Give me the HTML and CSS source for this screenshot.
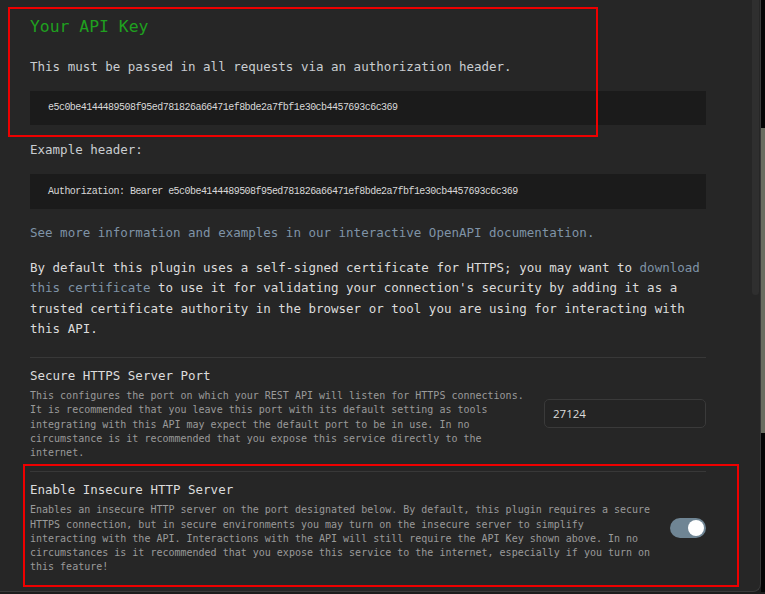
FILE: index.html
```html
<!DOCTYPE html>
<html lang="en">
<head>
<meta charset="utf-8">
<title>Local REST API settings</title>
<link rel="stylesheet" href="styles.css">
</head>
<body>
<div class="screen">
  <div class="modal">
    <div class="content">
      <h2 class="title">Your API Key</h2>
      <p class="text">This must be passed in all requests via an authorization header.</p>
      <pre class="code">e5c0be4144489508f95ed781826a66471ef8bde2a7fbf1e30cb4457693c6c369</pre>
      <p class="text text-after-code">Example header:</p>
      <pre class="code code-tall">Authorization: Bearer e5c0be4144489508f95ed781826a66471ef8bde2a7fbf1e30cb4457693c6c369</pre>
      <p class="text link-line"><a class="link" href="#">See more information and examples in our interactive OpenAPI documentation.</a></p>
      <p class="para">By default this plugin uses a self-signed certificate for HTTPS; you may want to <a class="link" href="#">download this certificate</a> to use it for validating your connection's security by adding it as a trusted certificate authority in the browser or tool you are using for interacting with this API.</p>

      <div class="setting">
        <div class="setting-info">
          <div class="setting-name">Secure HTTPS Server Port</div>
          <div class="setting-desc">This configures the port on which your REST API will listen for HTTPS connections. It is recommended that you leave this port with its default setting as tools integrating with this API may expect the default port to be in use. In no circumstance is it recommended that you expose this service directly to the internet.</div>
        </div>
        <div class="setting-control">
          <input class="port-input" type="text" value="27124">
        </div>
      </div>

      <div class="setting setting-last">
        <div class="setting-info">
          <div class="setting-name">Enable Insecure HTTP Server</div>
          <div class="setting-desc">Enables an insecure HTTP server on the port designated below. By default, this plugin requires a secure HTTPS connection, but in secure environments you may turn on the insecure server to simplify interacting with the API. Interactions with the API will still require the API Key shown above. In no circumstances is it recommended that you expose this service to the internet, especially if you turn on this feature!</div>
        </div>
        <div class="setting-control">
          <div class="toggle"><div class="knob"></div></div>
        </div>
      </div>
    </div>
    <div class="scrollbar"><div class="thumb"></div></div>
  </div>
  <div class="backdrop">
    <div class="bd-top"></div>
    <div class="bd-mid"></div>
    <div class="bd-low"></div>
  </div>
</div>
<div class="bottom-strip"></div>

<div class="annot annot-1"></div>
<div class="annot annot-2"></div>
</body>
</html>
```
FILE: styles.css
```css
html, body {
  margin: 0;
  padding: 0;
}
body {
  width: 765px;
  height: 594px;
  overflow: hidden;
  background: #1c1c1c;
  font-family: "DejaVu Sans Mono", "Liberation Mono", monospace;
  position: relative;
}
.screen {
  display: flex;
  height: 592px;
}
.modal {
  width: 761px;
  height: 592px;
  box-sizing: border-box;
  display: flex;
  background: #262626;
  border-right: 1px solid #3a3a3a;
  border-bottom: 1px solid #3a3a3a;
  border-bottom-right-radius: 8px;
  overflow: hidden;
}
.content {
  flex: 1;
  padding: 0 46px 0 30px;
  overflow: hidden;
}
.scrollbar {
  width: 7px;
  flex: none;
  padding-right: 1px;
}
.thumb {
  width: 7px;
  height: 295px;
  background: #2f2f2f;
  border-radius: 0 0 4px 4px;
}
.backdrop {
  width: 4px;
  display: flex;
  flex-direction: column;
}
.bd-top {
  height: 128px;
  background: #050505;
}
.bd-mid {
  height: 305px;
  background: #6a6d60;
}
.bd-low {
  flex: 1;
  background: #050505;
}
.bottom-strip {
  height: 2px;
  background: #1c1c1c;
}

.title {
  margin: 17px 0 0;
  font-size: 16.4px;
  line-height: 20px;
  font-weight: normal;
  color: #1fa01f;
}
.text {
  margin: 14px 0 0;
  font-size: 12.5px;
  line-height: 20px;
  color: #c9cdd1;
}
.title + .text {
  margin-top: 20px;
}
.text-after-code {
  margin-top: 15px;
}
.code {
  margin: 14px 0 0;
  height: 34px;
  line-height: 34px;
  padding: 0 18px;
  background: #1b1b1b;
  font-family: "Liberation Mono", monospace;
  font-size: 10px;
  letter-spacing: -0.54px;
  color: #d8d8d8;
  white-space: pre;
  overflow: hidden;
}
.code-tall {
  height: 35px;
  line-height: 35px;
}
.link {
  color: #7f93a6;
  text-decoration: none;
}
.para {
  margin: 15px 0 0;
  font-size: 12.5px;
  line-height: 20.3px;
  color: #dcdcdc;
}

.setting {
  display: flex;
  align-items: center;
  gap: 16px;
  border-top: 1px solid #383838;
  padding: 9px 0 11px;
}
.para + .setting {
  margin-top: 18px;
}
.setting-last {
  border-bottom: 1px solid #383838;
}
.setting-info {
  flex: 1;
  min-width: 0;
}
.setting-name {
  font-size: 12.5px;
  line-height: 18px;
  color: #dcdcdc;
}
.setting-desc {
  margin-top: 4px;
  font-size: 10px;
  line-height: 14.25px;
  color: #9a9a9a;
}
.setting-control {
  flex: none;
  display: flex;
  align-items: center;
}
.port-input {
  width: 162px;
  height: 29px;
  box-sizing: border-box;
  margin: 0;
  padding: 0 8px;
  border: 1px solid #3a3a3a;
  border-radius: 5px;
  background: #242424;
  color: #dcdcdc;
  font-family: "Open Sans", "Noto Sans", sans-serif;
  font-size: 11.5px;
  outline: none;
}
.toggle {
  width: 36px;
  height: 20px;
  border-radius: 10px;
  background: #6f8594;
  display: flex;
  align-items: center;
  justify-content: flex-end;
  padding: 0 2px;
  box-sizing: border-box;
}
.knob {
  width: 16px;
  height: 16px;
  border-radius: 50%;
  background: #ffffff;
}

.annot {
  position: absolute;
  border: 2px solid #ee0000;
  box-sizing: border-box;
  pointer-events: none;
}
.annot-1 {
  left: 8px;
  top: 7px;
  width: 590px;
  height: 130px;
}
.annot-2 {
  left: 23px;
  top: 464px;
  width: 716px;
  height: 123px;
}
```
